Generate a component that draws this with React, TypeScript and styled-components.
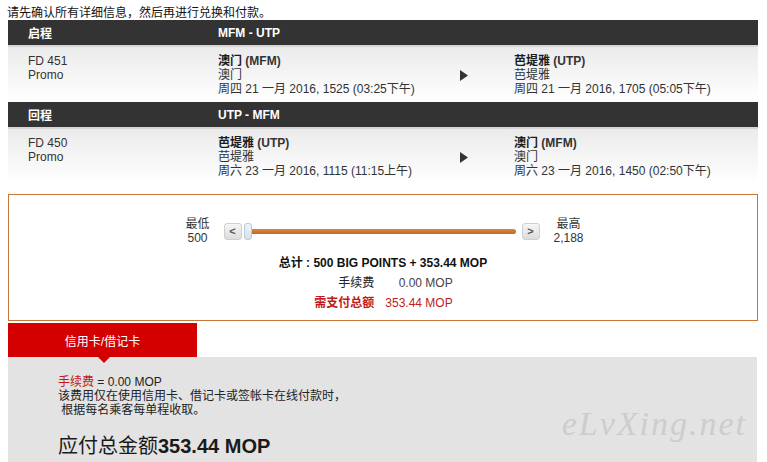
import React from "react";
import styled, { createGlobalStyle } from "styled-components";

const Global = createGlobalStyle`
  html, body { margin: 0; padding: 0; background: #fff; }
  body {
    font-family: "Liberation Sans", "Noto Sans CJK SC", Arial, sans-serif;
    font-size: 12px;
    color: #333;
  }
`;

const Page = styled.div`
  width: 750px;
  margin-left: 8px;
  padding-top: 6px;
`;

const Intro = styled.div`
  line-height: 14px;
  color: #111;
  margin-left: -1px;
`;

const Grid = `
  display: grid;
  grid-template-columns: 190px 242px 54px 1fr;
  padding-left: 20px;
`;

const LegHeader = styled.div`
  ${Grid}
  height: 25px;
  align-items: center;
  background: #333;
  border-bottom: 2px solid #d6d6d6;
  color: #fff;
  font-weight: bold;
`;

const LegRow = styled.div`
  ${Grid}
  padding-top: 7px;
  padding-bottom: 6px;
  line-height: 14px;
  background: linear-gradient(#ebebeb, #ffffff);
  color: #333;
`;

const Col = styled.div`
  display: flex;
  flex-direction: column;
`;

const City = styled.span`
  color: #1c1c1c;
  font-weight: bold;
`;

const ArrowCell = styled.div`
  display: flex;
  align-items: center;
`;

const LegGap = styled.div<{ $h: number }>`
  height: ${(p) => p.$h}px;
`;

const PointsBox = styled.div`
  box-sizing: border-box;
  width: 750px;
  border: 1px solid #c8773a;
  padding: 22px 0 7px;
  display: flex;
  flex-direction: column;
  align-items: center;
`;

const SliderRow = styled.div`
  display: flex;
  align-items: center;
  margin-left: 3px;
`;

const EndLabel = styled.div<{ $w: number }>`
  width: ${(p) => p.$w}px;
  text-align: center;
  line-height: 14px;
  color: #333;
`;

const StepButton = styled.div<{ $ml: number; $mr: number }>`
  box-sizing: border-box;
  width: 18px;
  height: 17px;
  margin-left: ${(p) => p.$ml}px;
  margin-right: ${(p) => p.$mr}px;
  border: 1px solid #cfcfcf;
  border-radius: 3px;
  background: linear-gradient(#f6f6f6, #dcdcdc);
  color: #555;
  font-weight: bold;
  font-size: 11px;
  line-height: 14px;
  text-align: center;
`;

const Thumb = styled.div`
  box-sizing: border-box;
  width: 8px;
  height: 17px;
  border: 1px solid #b9ccd6;
  border-radius: 3px;
  background: linear-gradient(#eef5f8, #d3e2ea);
`;

const Track = styled.div`
  width: 264px;
  height: 5px;
  border-radius: 0 3px 3px 0;
  background: linear-gradient(#d9883f, #c06a25);
`;

const Total = styled.div`
  margin-top: 8px;
  line-height: 20px;
  font-weight: bold;
  color: #111;
`;

const FeeGrid = styled.div`
  display: grid;
  grid-template-columns: auto auto;
  column-gap: 11px;
  line-height: 20px;
  margin-left: 1px;
`;

const FeeLabel = styled.div<{ $red?: boolean }>`
  text-align: right;
  color: ${(p) => (p.$red ? "#bf1b22" : "#222")};
  font-weight: ${(p) => (p.$red ? "bold" : "normal")};
`;

const FeeValue = styled.div<{ $red?: boolean }>`
  text-align: right;
  color: ${(p) => (p.$red ? "#bf1b22" : "#444")};
`;

const TabBar = styled.div`
  position: relative;
  z-index: 1;
  margin-top: 2px;
  display: flex;
`;

const Tab = styled.div`
  position: relative;
  width: 189px;
  height: 34px;
  background: #d40000;
  color: #fff;
  display: flex;
  align-items: center;
  justify-content: center;
  &::after {
    content: "";
    position: absolute;
    left: 90px;
    bottom: -6px;
    border-left: 6px solid transparent;
    border-right: 6px solid transparent;
    border-top: 6px solid #d40000;
  }
`;

const PayPanel = styled.div`
  position: relative;
  width: 749px;
  height: 120px;
  background: #e3e3e3;
  padding: 18px 0 0 50px;
  box-sizing: border-box;
`;

const FeeNote = styled.div`
  line-height: 14px;
  color: #222;
`;

const RedText = styled.span`
  color: #c01a1a;
`;

const BigTotal = styled.div`
  margin-top: 17px;
  font-size: 20px;
  line-height: 24px;
  color: #1a1a1a;
  b { font-weight: bold; }
`;

const Watermark = styled.div`
  position: absolute;
  right: 10px;
  top: 48px;
  font-family: "Liberation Serif", "DejaVu Serif", serif;
  font-style: italic;
  font-size: 34px;
  letter-spacing: 2px;
  color: #cdcdcd;
`;

const Arrow = () => (
  <svg width="8" height="11" viewBox="0 0 8 11">
    <path d="M0 0 L8 5.5 L0 11 Z" fill="#333" />
  </svg>
);

type Leg = {
  title: string;
  route: string;
  flight: string;
  from: [string, string, string, string];
  to: [string, string, string, string];
};

const legs: Leg[] = [
  {
    title: "启程",
    route: "MFM - UTP",
    flight: "FD 451",
    from: ["澳门", " (MFM)", "澳门", "周四 21 一月 2016, 1525 (03:25下午)"],
    to: ["芭堤雅", " (UTP)", "芭堤雅", "周四 21 一月 2016, 1705 (05:05下午)"],
  },
  {
    title: "回程",
    route: "UTP - MFM",
    flight: "FD 450",
    from: ["芭堤雅", " (UTP)", "芭堤雅", "周六 23 一月 2016, 1115 (11:15上午)"],
    to: ["澳门", " (MFM)", "澳门", "周六 23 一月 2016, 1450 (02:50下午)"],
  },
];

const Place = ({ p }: { p: [string, string, string, string] }) => (
  <Col>
    <span>
      <City>{p[0]}</City>
      <b>{p[1]}</b>
    </span>
    <span>{p[2]}</span>
    <span>{p[3]}</span>
  </Col>
);

export default function App() {
  return (
    <>
      <Global />
      <Page>
        <Intro>请先确认所有详细信息，然后再进行兑换和付款。</Intro>
        {legs.map((l, i) => (
          <React.Fragment key={l.flight}>
            <LegHeader>
              <span>{l.title}</span>
              <span>{l.route}</span>
            </LegHeader>
            <LegRow>
              <Col>
                <span>{l.flight}</span>
                <span>Promo</span>
              </Col>
              <Place p={l.from} />
              <ArrowCell>
                <Arrow />
              </ArrowCell>
              <Place p={l.to} />
            </LegRow>
            <LegGap $h={i === 0 ? 0 : 10} />
          </React.Fragment>
        ))}
        <PointsBox>
          <SliderRow>
            <EndLabel $w={24}>
              最低
              <br />
              500
            </EndLabel>
            <StepButton $ml={14} $mr={2}>&lt;</StepButton>
            <Thumb />
            <Track />
            <StepButton $ml={6} $mr={14}>&gt;</StepButton>
            <EndLabel $w={30}>
              最高
              <br />
              2,188
            </EndLabel>
          </SliderRow>
          <Total>总计 : 500 BIG POINTS + 353.44 MOP</Total>
          <FeeGrid>
            <FeeLabel>手续费</FeeLabel>
            <FeeValue>0.00 MOP</FeeValue>
            <FeeLabel $red>需支付总额</FeeLabel>
            <FeeValue $red>353.44 MOP</FeeValue>
          </FeeGrid>
        </PointsBox>
        <TabBar>
          <Tab>信用卡/借记卡</Tab>
        </TabBar>
        <PayPanel>
          <FeeNote>
            <RedText>手续费</RedText> = 0.00 MOP
            <br />
            该费用仅在使用信用卡、借记卡或签帐卡在线付款时，
            <br />
            &nbsp;根据每名乘客每单程收取。
          </FeeNote>
          <BigTotal>
            应付总金额<b>353.44 MOP</b>
          </BigTotal>
          <Watermark>eLvXing.net</Watermark>
        </PayPanel>
      </Page>
    </>
  );
}
